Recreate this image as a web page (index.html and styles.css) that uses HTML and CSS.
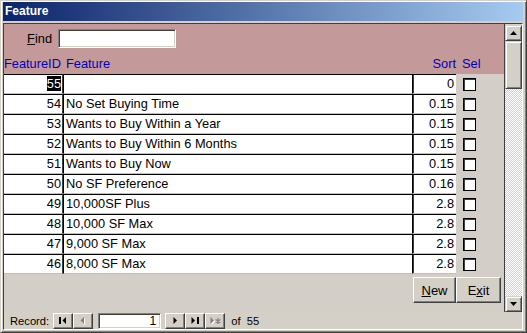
FILE: index.html
```html
<!DOCTYPE html>
<html lang="en">
<head>
  <meta charset="UTF-8" />
  <title>Feature</title>
  <link rel="stylesheet" href="styles.css">
</head>
<body>

  <div class="window">
    <div class="titlebar">Feature</div>

    <div class="client">
      <div class="main">
        <div class="form">

          <div class="form-header">
            <div class="find-row">
              <label class="find-label"><u>F</u>ind</label>
              <div class="textbox find-box"></div>
            </div>
            <div class="col-labels">
              <span class="h-id">FeatureID</span>
              <span class="h-name">Feature</span>
              <span class="h-sort">Sort</span>
              <span class="h-sel">Sel</span>
            </div>
          </div>

          <div class="detail">
            <div class="rows">
              <div class="row">
                <div class="cell c-id"><span class="selected">55</span></div>
                <div class="cell c-name"></div>
                <div class="cell c-sort">0</div>
                <div class="c-sel"><span class="check"></span></div>
              </div>
              <div class="row">
                <div class="cell c-id">54</div>
                <div class="cell c-name">No Set Buying Time</div>
                <div class="cell c-sort">0.15</div>
                <div class="c-sel"><span class="check"></span></div>
              </div>
              <div class="row">
                <div class="cell c-id">53</div>
                <div class="cell c-name">Wants to Buy Within a Year</div>
                <div class="cell c-sort">0.15</div>
                <div class="c-sel"><span class="check"></span></div>
              </div>
              <div class="row">
                <div class="cell c-id">52</div>
                <div class="cell c-name">Wants to Buy Within 6 Months</div>
                <div class="cell c-sort">0.15</div>
                <div class="c-sel"><span class="check"></span></div>
              </div>
              <div class="row">
                <div class="cell c-id">51</div>
                <div class="cell c-name">Wants to Buy Now</div>
                <div class="cell c-sort">0.15</div>
                <div class="c-sel"><span class="check"></span></div>
              </div>
              <div class="row">
                <div class="cell c-id">50</div>
                <div class="cell c-name">No SF Preference</div>
                <div class="cell c-sort">0.16</div>
                <div class="c-sel"><span class="check"></span></div>
              </div>
              <div class="row">
                <div class="cell c-id">49</div>
                <div class="cell c-name">10,000SF Plus</div>
                <div class="cell c-sort">2.8</div>
                <div class="c-sel"><span class="check"></span></div>
              </div>
              <div class="row">
                <div class="cell c-id">48</div>
                <div class="cell c-name">10,000 SF Max</div>
                <div class="cell c-sort">2.8</div>
                <div class="c-sel"><span class="check"></span></div>
              </div>
              <div class="row">
                <div class="cell c-id">47</div>
                <div class="cell c-name">9,000 SF Max</div>
                <div class="cell c-sort">2.8</div>
                <div class="c-sel"><span class="check"></span></div>
              </div>
              <div class="row">
                <div class="cell c-id">46</div>
                <div class="cell c-name">8,000 SF Max</div>
                <div class="cell c-sort">2.8</div>
                <div class="c-sel"><span class="check"></span></div>
              </div>
            </div>

            <div class="actions">
              <button class="btn btn-new"><u>N</u>ew</button>
              <button class="btn btn-exit">E<u>x</u>it</button>
            </div>
          </div>

        </div>

        <div class="vscroll">
          <div class="sb-btn">
            <svg width="7" height="4" viewBox="0 0 7 4"><path d="M3.5 0 L7 4 L0 4 Z" fill="#000"/></svg>
          </div>
          <div class="sb-track">
            <div class="sb-thumb"></div>
          </div>
          <div class="sb-btn">
            <svg width="7" height="4" viewBox="0 0 7 4"><path d="M0 0 L7 0 L3.5 4 Z" fill="#000"/></svg>
          </div>
        </div>
      </div>

      <div class="navbar">
        <span class="nav-label">Record:</span>
        <div class="nav-group">
          <div class="nav-btn">
            <svg width="8" height="7" viewBox="0 0 8 7"><rect x="0" y="0" width="2" height="7" fill="#000"/><path d="M7 0 L7 7 L3.5 3.5 Z" fill="#000"/></svg>
          </div>
          <div class="nav-btn">
            <svg width="6" height="8" viewBox="0 0 6 8"><path d="M5 1 L5 8 L1.5 4.5 Z" fill="#fff"/><path d="M4 0 L4 7 L0.5 3.5 Z" fill="#808080"/></svg>
          </div>
        </div>
        <div class="textbox nav-box">1</div>
        <div class="nav-group">
          <div class="nav-btn">
            <svg width="5" height="7" viewBox="0 0 5 7"><path d="M0.5 0 L0.5 7 L4 3.5 Z" fill="#000"/></svg>
          </div>
          <div class="nav-btn">
            <svg width="8" height="7" viewBox="0 0 8 7"><path d="M0.5 0 L0.5 7 L4 3.5 Z" fill="#000"/><rect x="6" y="0" width="2" height="7" fill="#000"/></svg>
          </div>
          <div class="nav-btn">
            <svg width="11" height="8" viewBox="0 0 11 8"><path d="M1.5 1 L1.5 8 L5 4.5 Z" fill="#fff"/><path d="M0.5 0 L0.5 7 L4 3.5 Z" fill="#808080"/><path d="M8 1 V7 M5.5 2.5 L10.5 5.5 M5.5 5.5 L10.5 2.5" stroke="#808080" stroke-width="1.2"/></svg>
          </div>
        </div>
        <span class="nav-of">of&nbsp; 55</span>
      </div>
    </div>
  </div>

</body>
</html>
```

FILE: styles.css
```css
* {
  box-sizing: border-box;
}

body {
  margin: 0;
  font-family: "Liberation Sans", Arial, sans-serif;
  font-size: 12.8px;
  color: #000;
  background: #d4d0c8;
}

.window {
  width: 527px;
  height: 333px;
  display: flex;
  flex-direction: column;
  background: #d4d0c8;
  border: 1px solid;
  border-color: #d4d0c8 #404040 #404040 #d4d0c8;
  box-shadow: inset 1px 1px #fff, inset -1px -1px #808080;
  padding: 1px 3px 2px 2px;
}

.titlebar {
  height: 19px;
  flex-shrink: 0;
  padding-left: 2px;
  line-height: 19px;
  font-size: 12px;
  font-weight: bold;
  color: #fff;
  background: linear-gradient(to right, #0a246a, #a6caf0);
}

.client {
  margin-top: 2px;
  height: 307px;
  display: flex;
  flex-direction: column;
  border: 1px solid;
  border-color: #404040 #fff #fff #404040;
}

.main {
  height: 288px;
  display: flex;
}

.form {
  width: 500px;
  display: flex;
  flex-direction: column;
}

/* header section */

.form-header {
  height: 50px;
  flex-shrink: 0;
  background: #c4999a;
  padding-top: 5px;
}

.find-row {
  display: flex;
  align-items: center;
  height: 19px;
}

.find-label {
  width: 48px;
  margin-right: 6px;
  text-align: right;
}

.textbox {
  background: #fff;
  border: 1px solid;
  border-color: #808080 #fff #fff #808080;
  box-shadow: inset 1px 1px #404040, inset -1px -1px #d4d0c8;
}

.find-box {
  width: 118px;
  height: 19px;
}

.col-labels {
  display: flex;
  margin-top: 8px;
  height: 16px;
  line-height: 16px;
  color: #0000c0;
}

.h-id {
  width: 62px;
}

.h-name {
  flex: 1;
}

.h-sort {
  margin-right: 6px;
}

.h-sel {
  width: 42px;
}

/* detail section */

.detail {
  flex: 1;
  background: #d4cec9;
}

.row {
  display: flex;
  height: 20px;
}

.cell {
  height: 20px;
  background: #fff;
  border-top: 1px solid #000;
  border-bottom: 1px solid #c0c0c0;
  line-height: 18px;
  white-space: nowrap;
  overflow: hidden;
}

.c-id {
  width: 59px;
  text-align: right;
  padding-right: 1px;
  border-right: 1px solid #404040;
}

.c-name {
  width: 349px;
  padding-left: 2px;
  border-left: 1px solid #000;
}

.c-sort {
  width: 44px;
  text-align: right;
  padding-right: 2px;
  border-left: 1px solid #000;
  box-shadow: inset 1px 0 #404040;
}

.c-sel {
  display: flex;
  align-items: center;
  padding-left: 7px;
}

.check {
  width: 13px;
  height: 13px;
  background: #fff;
  border: 1px solid #000;
  box-shadow: inset 1px 1px #404040;
}

.selected {
  background: #000;
  color: #fff;
}

.actions {
  display: flex;
  justify-content: flex-end;
  margin-top: 3px;
  padding-right: 3px;
}

.btn {
  height: 26px;
  padding: 0;
  font-family: inherit;
  font-size: 13px;
  color: #000;
  background: #d4d0c8;
  border: 1px solid;
  border-color: #fff #404040 #404040 #fff;
  box-shadow: inset -1px -1px #808080;
}

.btn-new {
  width: 43px;
}

.btn-exit {
  width: 45px;
}

/* scroll bar */

.vscroll {
  width: 18px;
  display: flex;
  flex-direction: column;
  border-left: 1px solid #404040;
  padding-top: 1px;
}

.sb-btn {
  height: 16px;
  flex-shrink: 0;
  display: flex;
  align-items: center;
  justify-content: center;
  background: #d4d0c8;
  border: 1px solid;
  border-color: #d4d0c8 #404040 #404040 #d4d0c8;
  box-shadow: inset 1px 1px #fff, inset -1px -1px #808080;
}

.sb-track {
  flex: 1;
  background: repeating-conic-gradient(#d4d0c8 0 25%, #fff 0 50%) 0 0 / 2px 2px;
}

.sb-thumb {
  height: 48px;
  background: #d4d0c8;
  border: 1px solid;
  border-color: #d4d0c8 #404040 #404040 #d4d0c8;
  box-shadow: inset 1px 1px #fff, inset -1px -1px #808080;
}

/* record navigation */

.navbar {
  height: 17px;
  display: flex;
  align-items: center;
  padding-left: 6px;
  font-size: 11.2px;
}

.nav-label {
  margin-right: 4px;
}

.nav-group {
  display: flex;
}

.nav-btn {
  width: 20px;
  height: 16px;
  display: flex;
  align-items: center;
  justify-content: center;
  background: #d4d0c8;
  border: 1px solid;
  border-color: #fff #404040 #404040 #fff;
  box-shadow: inset -1px -1px #808080;
}

.nav-box {
  width: 63px;
  height: 16px;
  margin: 0 4px 0 5px;
  padding-right: 4px;
  text-align: right;
  font-size: 12px;
  line-height: 14px;
}

.nav-of {
  margin-left: 6px;
}
```
